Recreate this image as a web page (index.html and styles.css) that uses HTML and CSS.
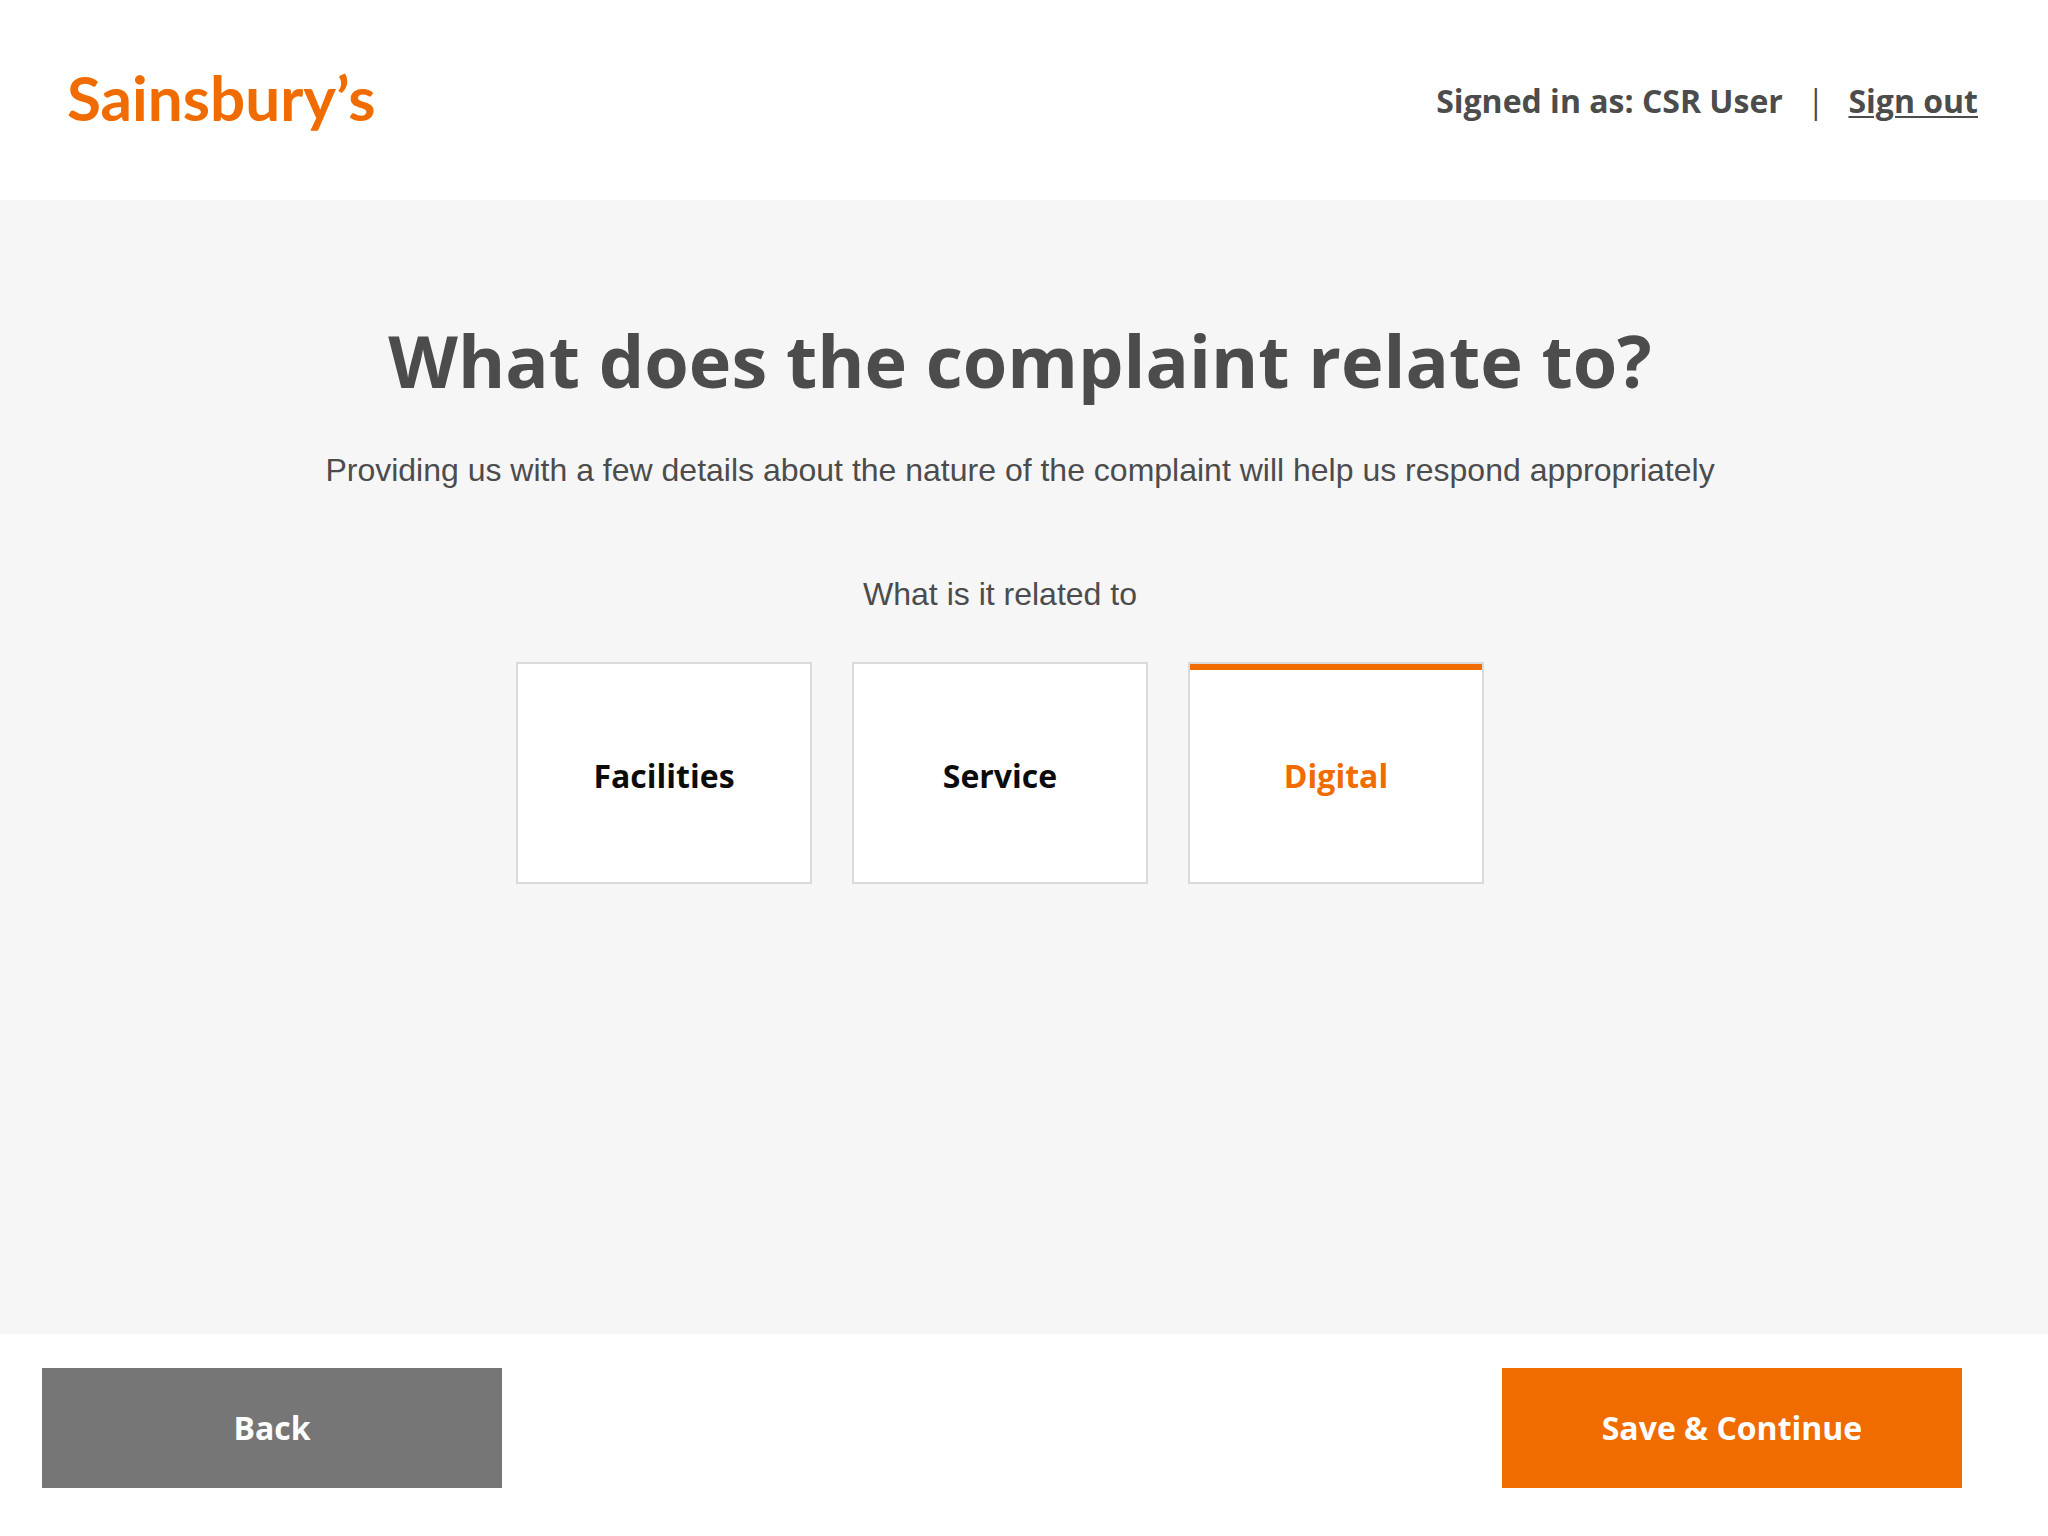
FILE: index.html
```html
<!DOCTYPE html>
<html lang="en">
<head>
<meta charset="utf-8">
<title>What does the complaint relate to? - Sainsbury’s</title>
<meta name="viewport" content="width=device-width, initial-scale=1">
<link rel="stylesheet" href="styles.css">
</head>
<body>
<header class="header">
  <a class="logo" href="#">Sainsbury’s</a>
  <div class="account">
    <span>Signed in as: CSR User</span>
    <span class="account-divider">|</span>
    <a class="sign-out" href="#">Sign out</a>
  </div>
</header>
<form class="form">
  <main class="main">
    <div class="intro">
      <h1 class="title">What does the complaint relate to?</h1>
      <p class="subtitle">Providing us with a few details about the nature of the complaint will help us respond appropriately</p>
    </div>
    <fieldset class="choices">
      <legend class="choices-label">What is it related to</legend>
      <div class="cards">
        <label class="card"><input class="card-input" type="radio" name="topic" value="facilities"><span>Facilities</span></label>
        <label class="card"><input class="card-input" type="radio" name="topic" value="service"><span>Service</span></label>
        <label class="card"><input class="card-input" type="radio" name="topic" value="digital" checked><span>Digital</span></label>
      </div>
    </fieldset>
  </main>
  <footer class="footer">
    <button class="button button-back" type="button">Back</button>
    <button class="button button-save" type="submit">Save &amp; Continue</button>
  </footer>
</form>
</body>
</html>
```
FILE: styles.css
```css
:root {
  --orange: #f06c00;
  --text: #4c4c4c;
  --display: "Open Sans", "Noto Sans", sans-serif;
}

* {
  box-sizing: border-box;
}

body {
  margin: 0;
  min-height: 100vh;
  display: flex;
  flex-direction: column;
  background: #fff;
  color: var(--text);
  font-family: "Liberation Sans", Arial, sans-serif;
  font-size: 32px;
  line-height: 48px;
}

.header {
  min-height: 200px;
  padding: 0 70px 0 67px;
  display: flex;
  align-items: center;
  justify-content: space-between;
}

.logo {
  margin-bottom: 6px;
  color: var(--orange);
  font-family: Lato, sans-serif;
  font-size: 62px;
  font-weight: 700;
  line-height: 80px;
  text-decoration: none;
}

.account {
  padding-top: 2px;
  display: flex;
  gap: 24px;
  font-family: var(--display);
  font-weight: 700;
}

.account-divider {
  font-weight: 400;
}

.sign-out {
  color: inherit;
  text-decoration-thickness: 2px;
  text-underline-offset: 3px;
}

.form {
  flex: 1;
  display: flex;
  flex-direction: column;
}

.main {
  flex: 1;
  padding: 112px 48px 64px 0;
  background: #f6f6f6;
  text-align: center;
}

.intro {
  padding-left: 40px;
}

.title {
  margin: 0;
  font-family: var(--display);
  font-size: 72px;
  font-weight: 700;
  line-height: 96px;
}

.subtitle {
  margin: 38px 0 0;
}

.choices {
  margin: 76px 0 0;
  padding: 0;
  border: 0;
}

.choices-label {
  width: 100%;
  padding: 0;
}

.cards {
  margin-top: 44px;
  display: flex;
  flex-wrap: wrap;
  justify-content: center;
  gap: 40px;
}

.card {
  width: 296px;
  min-height: 222px;
  padding-top: 6px;
  display: flex;
  align-items: center;
  justify-content: center;
  border: 2px solid #dadada;
  background: #fff;
  color: #0c0c0c;
  font-family: var(--display);
  font-weight: 700;
  cursor: pointer;
}

.card:has(:checked) {
  color: var(--orange);
  box-shadow: inset 0 6px var(--orange);
}

.card-input {
  position: absolute;
  opacity: 0;
}

.footer {
  padding: 34px 86px 48px 42px;
  display: flex;
  flex-wrap: wrap;
  justify-content: space-between;
  gap: 24px;
}

.button {
  width: 460px;
  min-height: 120px;
  padding: 0 0 2px;
  border: 0;
  color: #fff;
  font-family: var(--display);
  font-size: 32px;
  font-weight: 700;
  cursor: pointer;
}

.button-back {
  background: #767676;
}

.button-save {
  background: var(--orange);
}
```
